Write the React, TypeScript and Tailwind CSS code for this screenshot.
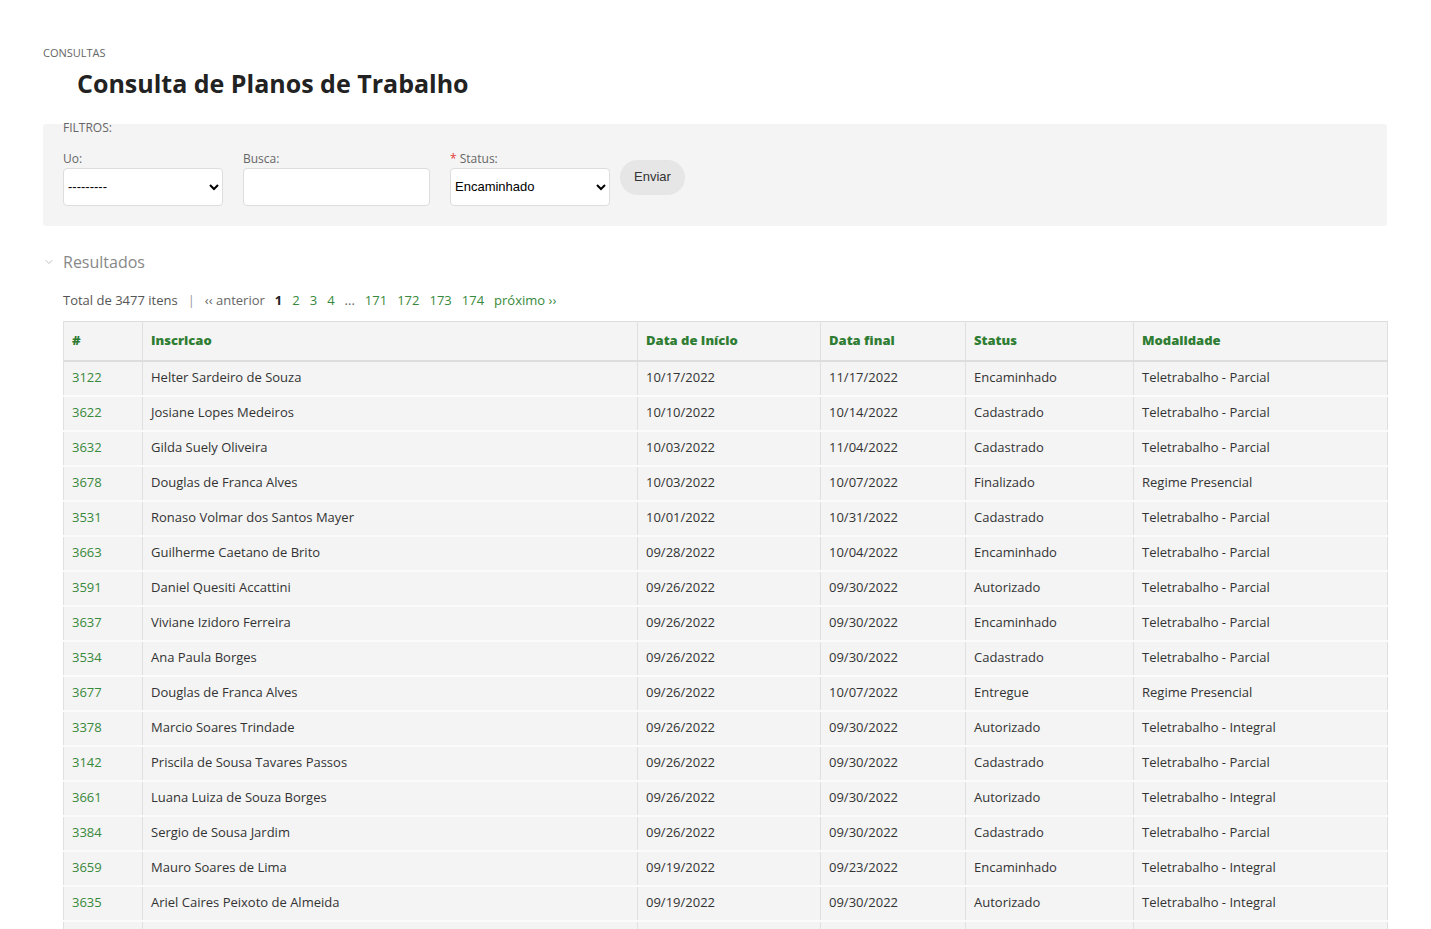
import { ChevronDown } from "lucide-react";

const rows = [
  ["3122", "Helter Sardeiro de Souza", "10/17/2022", "11/17/2022", "Encaminhado", "Teletrabalho - Parcial"],
  ["3622", "Josiane Lopes Medeiros", "10/10/2022", "10/14/2022", "Cadastrado", "Teletrabalho - Parcial"],
  ["3632", "Gilda Suely Oliveira", "10/03/2022", "11/04/2022", "Cadastrado", "Teletrabalho - Parcial"],
  ["3678", "Douglas de Franca Alves", "10/03/2022", "10/07/2022", "Finalizado", "Regime Presencial"],
  ["3531", "Ronaso Volmar dos Santos Mayer", "10/01/2022", "10/31/2022", "Cadastrado", "Teletrabalho - Parcial"],
  ["3663", "Guilherme Caetano de Brito", "09/28/2022", "10/04/2022", "Encaminhado", "Teletrabalho - Parcial"],
  ["3591", "Daniel Quesiti Accattini", "09/26/2022", "09/30/2022", "Autorizado", "Teletrabalho - Parcial"],
  ["3637", "Viviane Izidoro Ferreira", "09/26/2022", "09/30/2022", "Encaminhado", "Teletrabalho - Parcial"],
  ["3534", "Ana Paula Borges", "09/26/2022", "09/30/2022", "Cadastrado", "Teletrabalho - Parcial"],
  ["3677", "Douglas de Franca Alves", "09/26/2022", "10/07/2022", "Entregue", "Regime Presencial"],
  ["3378", "Marcio Soares Trindade", "09/26/2022", "09/30/2022", "Autorizado", "Teletrabalho - Integral"],
  ["3142", "Priscila de Sousa Tavares Passos", "09/26/2022", "09/30/2022", "Cadastrado", "Teletrabalho - Parcial"],
  ["3661", "Luana Luiza de Souza Borges", "09/26/2022", "09/30/2022", "Autorizado", "Teletrabalho - Integral"],
  ["3384", "Sergio de Sousa Jardim", "09/26/2022", "09/30/2022", "Cadastrado", "Teletrabalho - Parcial"],
  ["3659", "Mauro Soares de Lima", "09/19/2022", "09/23/2022", "Encaminhado", "Teletrabalho - Integral"],
  ["3635", "Ariel Caires Peixoto de Almeida", "09/19/2022", "09/30/2022", "Autorizado", "Teletrabalho - Integral"],
];

const headers = ["#", "Inscricao", "Data de Início", "Data final", "Status", "Modalidade"];
const widths = ["w-[79px]", "w-[495px]", "w-[183px]", "w-[145px]", "w-[168px]", "w-[254px]"];

export default function App() {
  return (
    <div className="min-h-screen bg-white font-['Open_Sans',sans-serif] text-[13px] text-[#333]">
      <div className="ml-[43px] mr-[44px] pt-[45px]">
        <p className="text-[11px] uppercase text-[#666]">Consultas</p>
        <h1 className="mt-[4px] pl-[34px] text-[25px] font-bold leading-[34px] text-[#222]">
          Consulta de Planos de Trabalho
        </h1>

        <form className="mt-[24px] h-[102px] rounded-[3px] bg-[#f4f4f4] px-5">
          <p className="-translate-y-[4px] text-[12px] uppercase leading-[16px] text-[#666]">Filtros:</p>
          <div className="mt-[10px] flex items-start gap-5">
            <label className="flex w-[160px] flex-col">
              <span className="text-[12px] text-[#666]">Uo:</span>
              <select className="h-[38px] rounded-[4px] border border-[#ddd] bg-white px-0 font-['Liberation_Sans',sans-serif] text-[13px] text-black">
                <option>---------</option>
              </select>
            </label>
            <label className="flex w-[187px] flex-col">
              <span className="text-[12px] text-[#666]">Busca:</span>
              <input className="h-[38px] rounded-[4px] border border-[#ddd] bg-white px-2" />
            </label>
            <label className="flex w-[160px] flex-col">
              <span className="text-[12px] text-[#666]">
                <span className="text-[#e53935]">*</span> Status:
              </span>
              <select
                defaultValue="Encaminhado"
                className="h-[38px] rounded-[4px] border border-[#ddd] bg-white px-0 font-['Liberation_Sans',sans-serif] text-[13px] text-black"
              >
                <option>Encaminhado</option>
                <option>Cadastrado</option>
              </select>
            </label>
            <button
              type="button"
              className="-ml-[10px] mt-[10px] h-[35px] rounded-full bg-[#e6e6e6] px-[14px] font-['Liberation_Sans',sans-serif] text-[13px] text-[#333]"
            >
              Enviar
            </button>
          </div>
        </form>

        <div className="mt-[24px] flex items-center gap-[8px] text-[#888]">
          <ChevronDown className="h-[12px] w-[12px] text-[#aaa]" strokeWidth={1.5} />
          <span className="text-[16px]">Resultados</span>
        </div>

        <div className="ml-5 mt-[17px] flex items-center text-[13px] text-[#555]">
          <span>Total de 3477 itens</span>
          <span className="mx-[10px] text-[#999]">|</span>
          <span className="text-[#666]">‹‹ anterior</span>
          <span className="ml-[10px] font-bold text-[#222]">1</span>
          <span className="ml-[10px] flex gap-[10px] text-[#38893b]">
            <a>2</a>
            <a>3</a>
            <a>4</a>
            <span className="text-[#666]">...</span>
            <a>171</a>
            <a>172</a>
            <a>173</a>
            <a>174</a>
            <a>próximo ››</a>
          </span>
        </div>

        <div className="ml-5 mt-[11px]">
          <table className="w-full table-fixed border-collapse border border-[#ddd] bg-[#f4f4f4]">
            <colgroup>
              {widths.map((w) => (
                <col key={w} className={w} />
              ))}
            </colgroup>
            <thead>
              <tr className="h-[39px] border-b-2 border-[#ddd]">
                {headers.map((h) => (
                  <th
                    key={h}
                    className="border-x border-[#e0e0e0] px-2 text-left text-[13px] font-extrabold text-[#2f7d32]"
                  >
                    {h}
                  </th>
                ))}
              </tr>
            </thead>
            <tbody>
              {rows.map((r) => (
                <tr key={r[0]} className="h-[35px] border-t-2 border-[#fbfbfb]">
                  {r.map((c, i) => (
                    <td
                      key={i}
                      className={
                        i === 0
                          ? "border-x border-[#e0e0e0] px-2 text-[#38893b]"
                          : "border-x border-[#e0e0e0] px-2"
                      }
                    >
                      {c}
                    </td>
                  ))}
                </tr>
              ))}
              <tr className="h-[35px] border-t-2 border-[#fbfbfb]">
                {headers.map((h) => (
                  <td key={h} className="border-x border-[#e0e0e0] px-2" />
                ))}
              </tr>
            </tbody>
          </table>
        </div>
      </div>
    </div>
  );
}
